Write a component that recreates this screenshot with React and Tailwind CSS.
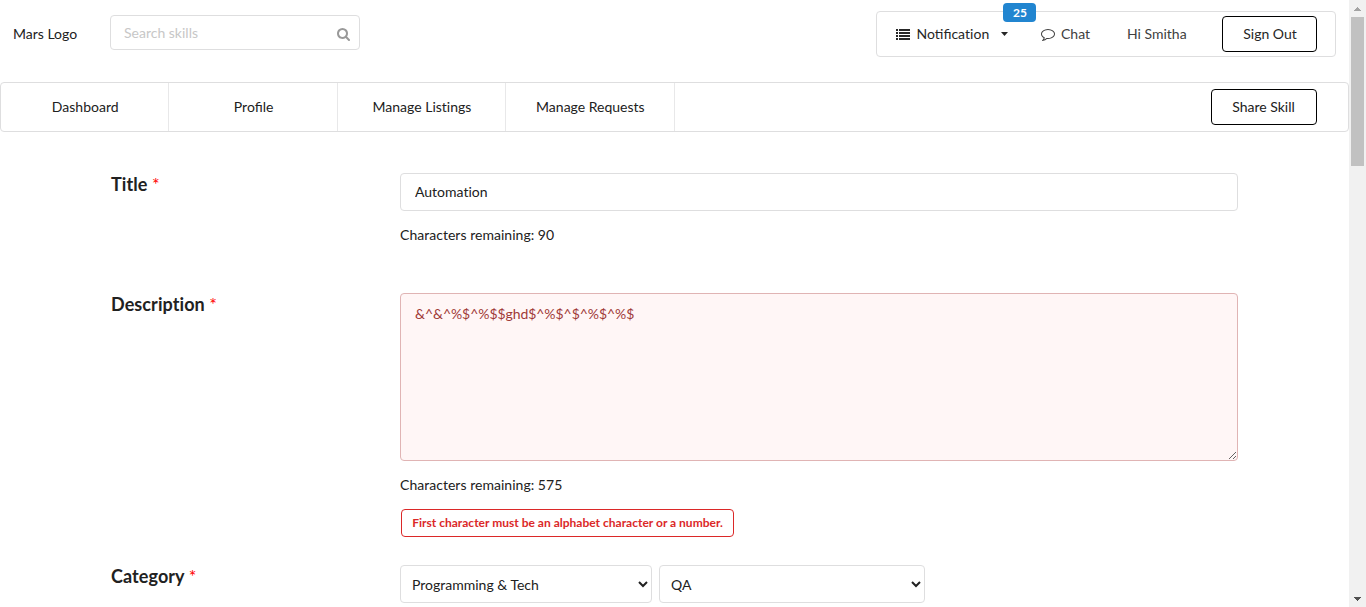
import React from "react";

const ListIcon = () => (
  <svg className="h-[11px] w-[14px] shrink-0" viewBox="0 0 14 11" fill="currentColor" shapeRendering="crispEdges">
    {[0, 3, 6, 9].map((y) => (
      <g key={y}>
        <rect x="0" y={y} width="2" height="2" />
        <rect x="3" y={y} width="11" height="2" />
      </g>
    ))}
  </svg>
);

const CommentIcon = () => (
  <svg className="h-[14px] w-[14px] shrink-0" viewBox="0 0 1792 1792" fill="currentColor">
    <path d="M896 384q-204 0-381.5 69.5t-282 187.5T128 896q0 112 71.5 213.5T401 1285l87 50-27 96q-24 91-70 172 152-63 275-171l43-38 57 6q69 8 130 8 204 0 381.5-69.5t282-187.5 104.5-255-104.5-255-282-187.5T896 384zm896 512q0 174-120 321.5t-326 233-450 85.5q-70 0-145-8-198 175-460 242-49 14-114 22h-5q-15 0-27-10.5T129 1754v-1q-3-4-.5-12t2-10 4.5-9.5l6-9 7-8.5 8-9q7-8 31-34.5t34.5-38 31-39.5 32.5-51 27-59 26-76q-157-89-247.5-220T0 896q0-130 71-248.5T262 443.5t286-136.5T896 256t348 51 286 136.5 191 204T1792 896z" />
  </svg>
);

const SearchIcon = () => (
  <svg className="h-[14px] w-[14px] shrink-0 text-[#999999]" viewBox="0 0 1792 1792" fill="currentColor">
    <path d="M1152 832q0-185-131.5-316.5T704 384 387.5 515.5 256 832t131.5 316.5T704 1280t316.5-131.5T1152 832zm512 832q0 52-38 90t-90 38q-54 0-90-38l-343-342q-179 124-399 124-143 0-273.5-55.5t-225-150-150-225T0 832t55.5-273.5 150-225 225-150T704 128t273.5 55.5 225 150 150 225T1408 832q0 220-124 399l343 343q37 37 37 90z" />
  </svg>
);

function Header() {
  return (
    <header className="flex h-[82px] items-start pl-[13px] pr-[13px]">
      <span className="mt-6 w-[97px] leading-5">Mars Logo</span>
      <div className="mt-[15px] flex h-[35px] w-[250px] items-center rounded-[4px] border border-[#dededf] pl-[13px] pr-[8.5px]">
        <input
          className="min-w-0 flex-1 outline-none placeholder:text-[#c7c7c7]"
          placeholder="Search skills"
        />
        <div className="pt-[2px]"><SearchIcon /></div>
      </div>
      <div className="ml-auto mt-[11px] flex h-[46px] w-[460px] items-center rounded-[4px] border border-[#dededf] pl-[19px] pr-[18px] text-[#404040]">
        <div className="relative flex h-5 w-[144px] items-center text-[#262626]">
          <ListIcon />
          <span className="ml-[6.5px]">Notifica<span className="[font-variant-ligatures:none]">tion</span></span>
          <svg className="ml-[12px] h-1 w-[7px]" viewBox="0 0 7 4" fill="currentColor">
            <path d="M0 0h7L3.5 4z" />
          </svg>
          <span className="absolute left-[107px] top-[-21px] flex h-[19px] w-[33px] items-center justify-center rounded-[4px] bg-[#2185d0] pl-px pt-px text-[12px] font-bold leading-none text-white">
            25
          </span>
        </div>
        <div className="flex w-[87px] items-center gap-[6px] pl-px">
          <CommentIcon />
          <span>Chat</span>
        </div>
        <span>Hi Smitha</span>
        <button className="ml-auto h-9 w-[95px] rounded-[4px] border border-black pl-px text-[#262626]">Sign Out</button>
      </div>
    </header>
  );
}

function NavBar() {
  return (
    <nav className="flex h-[50px] items-center rounded-[4px] border border-[#dededf] pr-[31px]">
      <a className="flex h-full w-[168.4px] items-center justify-center border-r border-[#e8e8e9] pl-px">Dashboard</a>
      <a className="flex h-full w-[168.4px] items-center justify-center border-r border-[#e8e8e9] pl-px">Profile</a>
      <a className="flex h-full w-[168.4px] items-center justify-center border-r border-[#e8e8e9] pl-px [font-variant-ligatures:none]">Manage Listings</a>
      <a className="flex h-full w-[168.4px] items-center justify-center border-r border-[#e8e8e9] pl-px">Manage Requests</a>
      <button className="ml-auto h-9 w-[106px] rounded-[4px] border border-black pr-px">Share Skill</button>
    </nav>
  );
}

function Row({ label, className, children }) {
  return (
    <section className={`flex ${className}`}>
      <h3 className="w-[289px] shrink-0 text-[18px] font-bold leading-[22px] tracking-[0.08px] [font-variant-ligatures:none]">
        {label} <span className="font-normal text-[#ff0000]">*</span>
      </h3>
      <div className="w-[838px] [font-variant-ligatures:none]">{children}</div>
    </section>
  );
}

function ScrollBar() {
  return (
    <div className="flex w-[17px] shrink-0 flex-col items-center bg-[#f1f1f1]">
      <div className="flex h-[17px] items-center justify-center">
        <svg className="h-1 w-[7px]" viewBox="0 0 7 4" fill="#a3a3a3" shapeRendering="crispEdges">
          <path d="M3 0h1v1h1v1h1v1h1v1H0V3h1V2h1V1h1z" />
        </svg>
      </div>
      <div className="h-[149px] w-[13px] bg-[#c1c1c1]" />
      <div className="mt-auto flex h-[17px] items-center justify-center">
        <svg className="h-1 w-[7px]" viewBox="0 0 7 4" fill="#505050" shapeRendering="crispEdges">
          <path d="M0 0h7v1H6v1H5v1H4v1H3V3H2V2H1V1H0z" />
        </svg>
      </div>
    </div>
  );
}

export default function App() {
  return (
    <div className="flex h-[607px] overflow-hidden bg-white font-['Lato',sans-serif] text-[14px] leading-5 text-[#212121]">
      <div className="min-w-0 flex-1">
        <Header />
        <NavBar />
        <main className="pl-[111px] pt-[41px]">
          <Row label="Title" className="h-[120px]">
            <input
              className="block h-[38px] w-full rounded-[4px] border border-[#dededf] px-[14px] pb-[2px] outline-none"
              defaultValue="Automation"
            />
            <p className="mt-[14px] tracking-[0.03px]">Characters remaining: 90</p>
          </Row>
          <Row label="Description" className="h-[272px]">
            <textarea
              className="block h-[168px] w-full resize rounded-[4px] border border-[#e0b4b4] bg-[#fff6f6] px-[14px] py-[11px] leading-[18px] tracking-[-0.06px] text-[#9f3a38] outline-none"
              defaultValue="&^&^%$^%$$ghd$^%$^$^%$^%$"
            />
            <p className="mt-[14px] tracking-[0.03px]">Characters remaining: 575</p>
            <div className="ml-px mt-[14px] flex h-7 w-[333px] items-center justify-center whitespace-nowrap rounded-[4px] border border-[#db2828] text-[12px] font-bold leading-none tracking-[0.01px] text-[#db2828]">
              First character must be an alphabet character or a number.
            </div>
          </Row>
          <Row label="Category" className="h-[60px]">
            <div className="flex gap-[7px]">
              <select className="h-[38px] w-[252px] rounded-[4px] border border-[#dededf] bg-white pl-[7px]">
                <option>Programming &amp; Tech</option>
              </select>
              <select className="h-[38px] w-[266px] rounded-[4px] border border-[#dededf] bg-white pl-[7px]">
                <option>QA</option>
              </select>
            </div>
          </Row>
        </main>
      </div>
      <ScrollBar />
    </div>
  );
}
